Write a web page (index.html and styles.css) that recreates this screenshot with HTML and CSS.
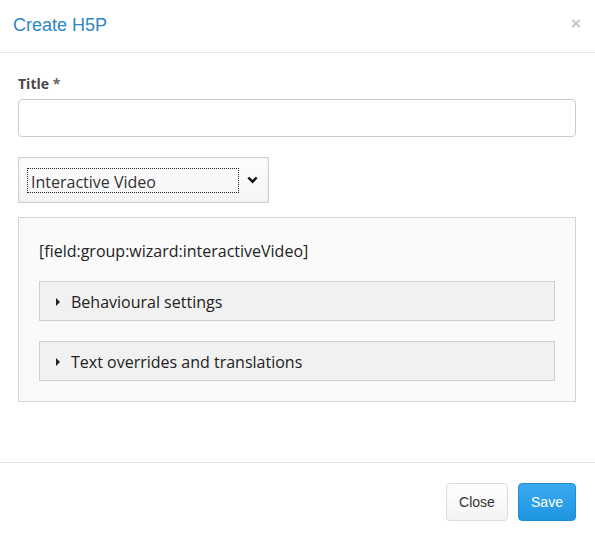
FILE: index.html
```html
<!DOCTYPE html>
<html>
<head>
<meta charset="utf-8">
<link rel="stylesheet" href="styles.css">
</head>
<body>
<div class="modal">
  <div class="modal-header">
    <h4 class="modal-title">Create H5P</h4>
    <span class="close">&#215;</span>
  </div>
  <div class="modal-body">
    <label class="field-label">Title <span class="req">*</span></label>
    <div class="input"></div>
    <div class="select">
      <div class="select-value">Interactive Video</div>
      <svg class="chev" width="11" height="8" viewBox="0 0 11 8"><path d="M1.3 1.5 L5.5 5.7 L9.7 1.5" fill="none" stroke="#111" stroke-width="2.4"/></svg>
    </div>
    <div class="group">
      <div class="group-text">[field:group:wizard:interactiveVideo]</div>
      <div class="collapsible"><span class="tri"></span>Behavioural settings</div>
      <div class="collapsible"><span class="tri"></span>Text overrides and translations</div>
    </div>
  </div>
  <div class="modal-footer">
    <button class="btn btn-default">Close</button>
    <button class="btn btn-primary">Save</button>
  </div>
</div>
</body>
</html>
```

FILE: styles.css
```css
html, body {
  margin: 0;
  padding: 0;
  background: #fff;
}
.modal {
  width: 595px;
  height: 540px;
  font-family: "Liberation Sans", Arial, sans-serif;
  display: flex;
  flex-direction: column;
}
.modal-header {
  height: 52px;
  border-bottom: 1px solid #e5e5e5;
  display: flex;
  align-items: center;
  justify-content: space-between;
  padding: 0 14px 0 13px;
  box-sizing: content-box;
}
.modal-title {
  margin: 0;
  font-size: 18px;
  font-weight: normal;
  color: #2f86c4;
  line-height: 20px;
  padding-bottom: 2px;
}
.close {
  color: #c4c4c4;
  font-size: 17px;
  font-weight: bold;
  line-height: 20px;
  padding-bottom: 4px;
}
.modal-body {
  padding: 21px 19px 0 18px;
  height: 409px;
  box-sizing: border-box;
  font-family: "Open Sans", sans-serif;
}
.field-label {
  display: block;
  font-size: 14px;
  font-weight: bold;
  color: #474747;
  line-height: 20px;
  height: 20px;
  margin-bottom: 5px;
}
.req {
  color: #666;
}
.input {
  height: 38px;
  box-sizing: border-box;
  border: 1px solid #ccc;
  border-radius: 4px;
  background: #fff;
  margin-bottom: 20px;
}
.select {
  width: 251px;
  height: 46px;
  box-sizing: border-box;
  border: 1px solid #d0d0d0;
  background: linear-gradient(#fdfdfd, #f5f5f5);
  box-shadow: inset 0 0 4px rgba(0,0,0,0.06);
  display: flex;
  align-items: center;
  padding-left: 8px;
  margin-bottom: 14px;
}
.select-value {
  width: 212px;
  height: 25px;
  box-sizing: border-box;
  border: 1px dotted #222;
  font-size: 16px;
  color: #333;
  line-height: 24px;
  padding-left: 3px;
  padding-top: 1px;
}
.chev {
  margin-left: 8px;
}
.group {
  height: 185px;
  box-sizing: border-box;
  border: 1px solid #d6d6d6;
  background: #fafafa;
  padding: 21px 20px 0 20px;
  display: flex;
  flex-direction: column;
}
.group-text {
  font-size: 16px;
  color: #222;
  line-height: 24px;
  margin-bottom: 18px;
}
.collapsible {
  height: 40px;
  box-sizing: border-box;
  border: 1px solid #d0d0d0;
  background: #f1f1f1;
  font-size: 16px;
  color: #222;
  display: flex;
  align-items: center;
  padding-left: 16px;
  padding-top: 2px;
  margin-bottom: 20px;
}
.tri {
  width: 0;
  height: 0;
  border-top: 4px solid transparent;
  border-bottom: 4px solid transparent;
  border-left: 4px solid #222;
  margin-right: 11px;
  margin-bottom: 1px;
}
.modal-footer {
  border-top: 1px solid #e5e5e5;
  display: flex;
  justify-content: flex-end;
  gap: 10px;
  padding: 20px 19px 0 0;
}
.btn {
  font-family: "Liberation Sans", Arial, sans-serif;
  font-size: 14px;
  height: 38px;
  border-radius: 4px;
  padding: 0 12px;
  margin: 0;
}
.btn-default {
  width: 62px;
  color: #333;
  border: 1px solid #ddd;
  background: linear-gradient(#fff, #f3f3f3);
}
.btn-primary {
  width: 58px;
  color: #fff;
  border: 1px solid #1d8fd8;
  background: linear-gradient(#3aaaf0, #1f95e0);
}
```
